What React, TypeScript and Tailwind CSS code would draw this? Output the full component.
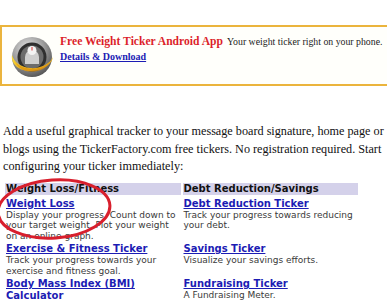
export default function App() {
  const serif = { fontFamily: '"Liberation Serif", "Times New Roman", serif' };
  const verdana = { fontFamily: '"DejaVu Sans", Verdana, sans-serif' };

  const rows = [
    [
      { title: 'Weight Loss', desc: 'Display your progress. Count down to your target weight. Plot your weight on an online graph.' },
      { title: 'Debt Reduction Ticker', desc: 'Track your progress towards reducing your debt.' },
    ],
    [
      { title: 'Exercise & Fitness Ticker', desc: 'Track your progress towards your exercise and fitness goal.' },
      { title: 'Savings Ticker', desc: 'Visualize your savings efforts.' },
    ],
    [
      { title: 'Body Mass Index (BMI) Calculator', desc: '' },
      { title: 'Fundraising Ticker', desc: 'A Fundraising Meter.' },
    ],
  ];

  return (
    <div className="relative w-[387px] h-[300px] overflow-hidden bg-white pt-[25px]">
      {/* Android app banner */}
      <div className="w-[430px] h-[61px] border-2 border-[#ebb43c] bg-[#fffffb] flex">
        <div className="ml-[8px] mt-[9px] w-[44px] h-[44px] shrink-0">
          <svg viewBox="0 0 44 44" className="w-[44px] h-[44px]">
            <defs>
              <radialGradient id="rim" cx="40%" cy="30%" r="75%">
                <stop offset="0%" stopColor="#e8e8e8" />
                <stop offset="55%" stopColor="#9a9a9a" />
                <stop offset="100%" stopColor="#505050" />
              </radialGradient>
              <linearGradient id="swoosh" x1="0" y1="0" x2="1" y2="1">
                <stop offset="0%" stopColor="#f8dc3c" />
                <stop offset="100%" stopColor="#e49b10" />
              </linearGradient>
            </defs>
            <circle cx="22" cy="21" r="20" fill="url(#rim)" />
            <circle cx="22" cy="21" r="14.5" fill="#2f2f2f" />
            <circle cx="22" cy="21" r="11.5" fill="#6c6c6c" />
            <path d="M15 21 a7 7 0 0 1 14 0 v7 h-14 z" fill="#cfcfcf" />
            <circle cx="22" cy="14.5" r="4.5" fill="#f4f4f4" />
            <path d="M22 11 v3.5" stroke="#d33" strokeWidth="1" />
            <path
              d="M2 19 C 0 30, 14 38, 28 34 C 36 32, 42 27, 43 21 C 40 28, 30 33, 20 32 C 10 31, 4 26, 2 19 Z"
              fill="url(#swoosh)"
            />
            <path d="M5 26 C 12 34, 30 36, 40 26 C 34 38, 12 40, 5 26 Z" fill="#d98e10" opacity="0.7" />
          </svg>
        </div>
        <div className="ml-[6px] mt-[6px]" style={serif}>
          <div className="leading-[14px] whitespace-nowrap">
            <span className="text-[11.6px] font-bold text-[#dc1f2b]">Free Weight Ticker Android App</span>{' '}
            <span className="text-[9.8px] text-[#222]">Your weight ticker right on your phone.</span>
          </div>
          <div className="leading-[12px]">
            <a href="#" className="text-[10px] font-bold text-[#1c1cb4] underline">
              Details &amp; Download
            </a>
          </div>
        </div>
      </div>

      {/* Intro paragraph */}
      <p className="mt-[37px] pl-[3px] text-[12.2px] leading-[17.5px] text-[#111] whitespace-nowrap" style={serif}>
        Add a useful graphical tracker to your message board signature, home page or
        <br />
        blogs using the TickerFactory.com free tickers. No registration required. Start
        <br />
        configuring your ticker immediately:
      </p>

      {/* Ticker table */}
      <div className="mt-[7px] ml-[5px] w-[353px] grid grid-cols-2 gap-x-[2px]" style={verdana}>
        <div className="bg-[#d4d1ea] h-[12px] text-[10px] leading-[12px] font-bold text-[#111] pl-[1px]">
          Weight Loss/Fitness
        </div>
        <div className="bg-[#d4d1ea] h-[12px] text-[10px] leading-[12px] font-bold text-[#111] pl-[1px]">
          Debt Reduction/Savings
        </div>
        {rows.map((row, i) =>
          row.map((cell, j) => (
            <div key={`${i}-${j}`} className={`pl-[1px] ${i === 0 ? 'pt-[3px]' : 'pt-[2px]'}`}>
              <a href="#" className="block text-[10px] leading-[12px] font-bold text-[#1c1cb4] underline">
                {cell.title}
              </a>
              {cell.desc && <div className="text-[9px] leading-[10.5px] text-[#3a3a3a]">{cell.desc}</div>}
            </div>
          ))
        )}
      </div>

      {/* Red annotation circle */}
      <svg className="absolute left-0 top-0 pointer-events-none" width="387" height="300">
        <ellipse
          cx="54"
          cy="209"
          rx="56"
          ry="29"
          transform="rotate(-4 54 209)"
          fill="none"
          stroke="#d81f2d"
          strokeWidth="3"
        />
      </svg>
    </div>
  );
}
